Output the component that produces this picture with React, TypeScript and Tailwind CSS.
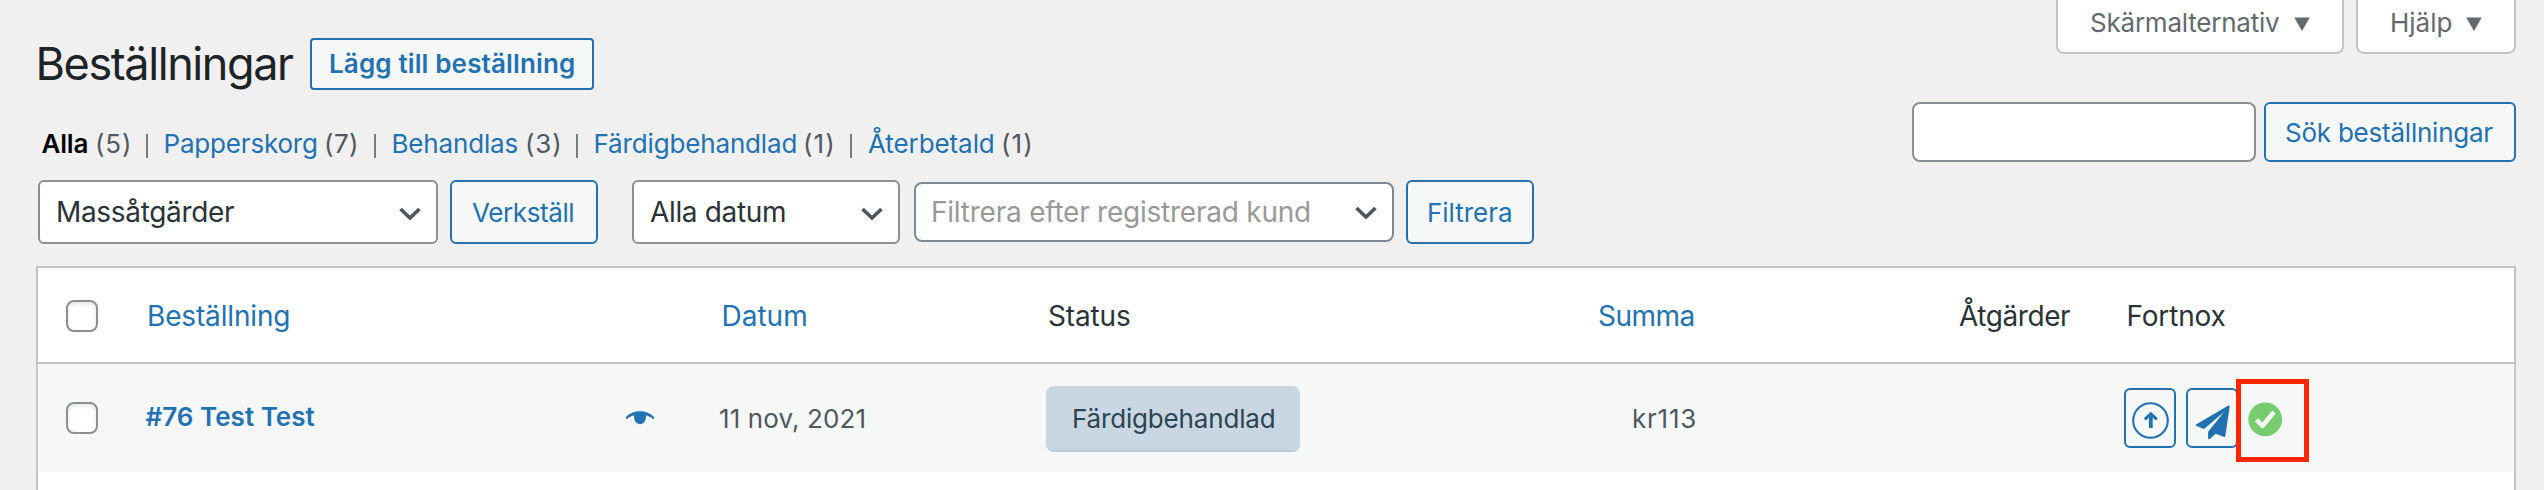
import React from "react";

function Chevron({ className = "" }: { className?: string }) {
  return (
    <svg className={`h-[14px] w-[22px] shrink-0 ${className}`} viewBox="0 0 22 14" fill="none">
      <path d="M1.5 2 L11 11 L20.5 2" stroke="#50575e" strokeWidth="3.7" />
    </svg>
  );
}

function Triangle({ className = "" }: { className?: string }) {
  return (
    <svg className={`h-[14px] w-4 shrink-0 ${className}`} viewBox="0 0 16 14">
      <path d="M0.2 0.5 H15.8 L8 14 Z" fill="#646970" />
    </svg>
  );
}

function Checkbox() {
  return (
    <span className="block h-8 w-8 shrink-0 rounded-[8px] border-2 border-[#8c8f94] bg-white shadow-[inset_0_2px_4px_rgba(0,0,0,0.1)]" />
  );
}

const separator = "w-[2px] h-[24px] bg-[#777c82] shrink-0 mt-[10px]";

export default function App() {
  return (
    <div className="flex h-[490px] w-[2544px] flex-col overflow-hidden bg-[#f0f0f0] font-['Inter',sans-serif] text-[26px] whitespace-nowrap text-[#50575e]">
      <header className="flex h-24 shrink-0 items-start">
        <h1 className="mt-[38px] ml-[35.5px] w-[274.5px] text-[45px] leading-[52px] tracking-[-1.4px] text-[#1d2327]">
          Beställningar
        </h1>
        <button className="mt-[38px] h-[52px] w-[284px] rounded-[4px] border-2 border-[#2271b1] bg-[#f6f7f7] pl-[17px] text-left leading-[48px] font-semibold tracking-[0.14px] text-[#2271b1]">
          Lägg till beställning
        </button>
        <div className="mr-7 ml-auto flex gap-3 text-[#646970]">
          <button className="flex h-[54px] w-[288px] items-start rounded-b-[8px] border-2 border-t-0 border-[#c3c4c7] bg-white pl-8">
            <span className="w-[204px] text-left leading-[46px] tracking-[-0.22px]">Skärmalternativ</span>
            <Triangle className="mt-[17px]" />
          </button>
          <button className="flex h-[54px] w-[160px] items-start rounded-b-[8px] border-2 border-t-0 border-[#c3c4c7] bg-white pl-8">
            <span className="w-[76px] text-left leading-[46px] tracking-[-0.03px]">Hjälp</span>
            <Triangle className="mt-[17px]" />
          </button>
        </div>
      </header>

      <div className="flex h-[84px] shrink-0 items-start">
        <nav className="mt-7 ml-[41.5px] flex leading-[40px]">
          <span className="w-[53.5px] font-semibold tracking-[-0.18px] text-black">Alla</span>
          <span className="w-[51px] tracking-[0.8px]">(5)</span>
          <span className={separator} />
          <a className="ml-[15.5px] w-[160.5px] tracking-[-0.18px] text-[#2271b1]">Papperskorg</a>
          <span className="w-[50px] tracking-[0.4px]">(7)</span>
          <span className={separator} />
          <a className="ml-[15.5px] w-[133.5px] tracking-[-0.17px] text-[#2271b1]">Behandlas</a>
          <span className="w-[51px] tracking-[0.8px]">(3)</span>
          <span className={separator} />
          <a className="ml-[15.5px] w-[209.5px] tracking-[-0.15px] text-[#2271b1]">Färdigbehandlad</a>
          <span className="w-[47px] tracking-[1.1px]">(1)</span>
          <span className={separator} />
          <a className="ml-[16px] w-[133px] tracking-[-0.09px] text-[#2271b1]">Återbetald</a>
          <span className="tracking-[1.1px]">(1)</span>
        </nav>
        <div className="mt-[6px] mr-7 ml-auto flex gap-2">
          <input className="h-[60px] w-[344px] rounded-[8px] border-2 border-[#8c8f94] bg-white px-4 outline-none" />
          <button className="h-[60px] w-[252px] rounded-[6px] border-2 border-[#2271b1] bg-[#f6f7f7] pt-[1px] pl-[19px] text-left leading-[54px] tracking-[-0.23px] text-[#2271b1]">
            Sök beställningar
          </button>
        </div>
      </div>

      <div className="flex h-16 shrink-0 items-center pl-[38px]">
        <div className="flex h-16 w-[400px] items-center justify-between rounded-[6px] border-2 border-[#8c8f94] bg-white pr-[15px] pl-[16px] text-[28px] tracking-[-0.33px] text-[#2c3338]">
          <span>Massåtgärder</span>
          <Chevron className="mt-[4px]" />
        </div>
        <button className="ml-3 h-16 w-[148px] rounded-[6px] border-2 border-[#2271b1] bg-[#f6f7f7] pt-[2px] pl-[20px] text-left leading-[58px] tracking-[-0.39px] text-[#2271b1]">
          Verkställ
        </button>
        <div className="ml-[34px] flex h-16 w-[268px] items-center justify-between rounded-[6px] border-2 border-[#8c8f94] bg-white pr-[15px] pl-4 text-[28px] tracking-[-0.34px] text-[#2c3338]">
          <span>Alla datum</span>
          <Chevron className="mt-[4px]" />
        </div>
        <div className="ml-[14px] flex h-[60px] w-[480px] items-center justify-between rounded-[8px] border-2 border-[#7e8993] bg-white pr-[15px] pl-[15px] text-[28px] tracking-[-0.23px] text-[#999999]">
          <span>Filtrera efter registrerad kund</span>
          <Chevron className="mt-[1px]" />
        </div>
        <button className="ml-3 h-16 w-32 rounded-[6px] border-2 border-[#2271b1] bg-[#f6f7f7] pt-[2px] pl-[19px] text-left leading-[58px] tracking-[-0.02px] text-[#2271b1]">
          Filtrera
        </button>
      </div>

      <section className="mr-7 ml-[36px] mt-[22px] grow border-2 border-b-0 border-[#c3c4c7] bg-white">
        <div className="flex h-24 items-center border-b-2 border-[#c3c4c7] pt-[2px] text-[28px] text-[#2c3338]">
          <div className="w-[109px] pl-7">
            <Checkbox />
          </div>
          <div className="w-[574.5px] tracking-[-0.15px] text-[#2271b1]">Beställning</div>
          <div className="w-[326.5px] tracking-[0px] text-[#2271b1]">Datum</div>
          <div className="w-[550px] tracking-[-0.14px]">Status</div>
          <div className="w-[361px] tracking-[-0.52px] text-[#2271b1]">Summa</div>
          <div className="w-[167.5px] tracking-[-0.44px]">Åtgärder</div>
          <div className="tracking-[-0.18px]">Fortnox</div>
        </div>
        <div className="flex h-[108px] items-center bg-[#f6f7f7]">
          <div className="w-[107.5px] pl-7">
            <Checkbox />
          </div>
          <div className="flex w-[573.5px] items-center">
            <a className="w-[479px] pb-[3px] font-semibold tracking-[0.02px] text-[#2271b1]">#76 Test Test</a>
            <svg className="h-[14px] w-[30px]" viewBox="0 0 30 14">
              <path
                d="M0.8 6.2 C4.5 2.2 9.5 0.3 15 0.3 C20.5 0.3 25.5 2.2 29.2 6.2 L28.6 8.4 C26.4 6.6 23.8 5.2 20.8 4.3 C21 5 21 5.8 20.9 6.6 C20.7 10.4 18.4 13.2 15 13.2 C11.6 13.2 9.3 10.4 9.1 6.6 C9 5.8 9 5 9.2 4.3 C6.2 5.2 3.6 6.6 1.4 8.4 Z"
                fill="#2271b1"
              />
            </svg>
          </div>
          <div className="w-[327px] pt-[1px] tracking-[0.1px]">11 nov, 2021</div>
          <div className="w-[586px] pt-[2px]">
            <span className="block h-[66px] w-[254px] rounded-[8px] border-b-2 border-[#bccad5] bg-[#c8d7e1] pl-[26px] leading-[65px] tracking-[-0.17px] text-[#2e4453]">
              Färdigbehandlad
            </span>
          </div>
          <div className="w-[492px] pt-[1px] tracking-[0.75px]">kr113</div>
          <div className="relative flex">
            <span className="flex h-[60px] w-[52px] items-center justify-center rounded-[6px] border-2 border-[#2271b1]">
              <svg className="mt-[4px] ml-[1px] h-[37px] w-[37px] shrink-0" viewBox="0 0 37 37" fill="none" stroke="#2271b1">
                <circle cx="18.5" cy="18.5" r="17.3" strokeWidth="2.1" />
                <path d="M18.8 26 V13.5" strokeWidth="3.8" />
                <path d="M12.8 17.4 L18.8 11.9 L24.8 17.4" strokeWidth="3" />
              </svg>
            </span>
            <span className="ml-[10px] flex h-[60px] w-[52px] items-center rounded-[6px] border-2 border-[#2271b1] pl-[7px]">
              <svg className="mt-[8px] h-[35px] w-[35px] shrink-0" viewBox="0 0 35 35" fill="#2271b1">
                <path d="M33.4 0.5 Q34.8 0.2 34.7 1.6 L30.3 31 Q30 32.4 28.6 31.8 L20.6 28.8 L14.6 34.2 Q13.2 34.6 13.1 33.2 L13.1 26.8 L29 7 L9 24 L1 20.8 Q0.2 20.2 1 19.4 Z" />
              </svg>
            </span>
            <svg className="mt-[14px] ml-[10px] h-[35px] w-[35px]" viewBox="0 0 35 35">
              <circle cx="17.2" cy="17.4" r="16.9" fill="#77cc6d" />
              <path d="M8.5 17.8 L14.6 23.8 L26 10" fill="none" stroke="#f6f7f7" strokeWidth="4.6" strokeLinejoin="round" />
            </svg>
            <span className="absolute top-[-9px] left-[112px] h-[83px] w-[73px] border-5 border-[#ff2600]" />
          </div>
        </div>
      </section>
    </div>
  );
}
